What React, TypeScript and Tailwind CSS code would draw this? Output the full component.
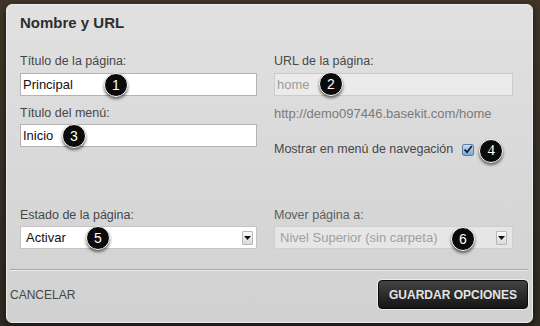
import React from "react";

function Badge({ n, className }: { n: string; className: string }) {
  return (
    <span
      className={`absolute z-10 flex h-[24px] w-[24px] items-center justify-center rounded-full border-[1.5px] border-white bg-[#0a0a0a] text-[14px] leading-none text-white shadow-[0_2px_3px_rgba(0,0,0,0.55)] ${className}`}
    >
      {n}
    </span>
  );
}

function SelectArrow() {
  return (
    <span className="flex h-[14px] w-[11px] items-center justify-center rounded-[1px] border border-[#b8b8b8] bg-gradient-to-b from-[#fbfbfb] to-[#d9d9d9]">
      <svg width="7" height="4" viewBox="0 0 7 4">
        <path d="M0 0h7L3.5 4z" fill="#111" />
      </svg>
    </span>
  );
}

export default function App() {
  return (
    <div className="h-[326px] w-[540px] overflow-hidden bg-gradient-to-b from-[#403627] to-[#2e2a22] pl-[6px] pt-[4px] font-['Liberation_Sans',Arial,sans-serif]">
      <div className="flex h-[319px] w-[527px] flex-col rounded-[6px] border border-[#ececec] bg-gradient-to-b from-[#e1e1e1] to-[#d1d1d1] shadow-[0_2px_6px_rgba(0,0,0,0.6)]">
        <div className="pl-[13px] pr-[19px] pt-[9px]">
          <h1 className="text-[15px] font-bold leading-[18px] text-[#2e2e2e]">
            Nombre y URL
          </h1>

          <div className="mt-[22px] grid grid-cols-[237px_239px] gap-x-[17px]">
            {/* left column */}
            <div>
              <p className="text-[12.5px] leading-[15px] text-[#474747]">
                Título de la página:
              </p>
              <div className="relative mt-[4px]">
                <div className="flex h-[23px] items-center border border-[#b3b3b3] bg-white pl-[2px] text-[13px] text-[#111]">
                  Principal
                </div>
                <Badge n="1" className="left-[84px] top-[0px]" />
              </div>

              <p className="mt-[10px] text-[12.5px] leading-[15px] text-[#474747]">
                Título del menú:
              </p>
              <div className="relative mt-[3px]">
                <div className="flex h-[23px] items-center border border-[#b3b3b3] bg-white pl-[2px] text-[13px] text-[#111]">
                  Inicio
                </div>
                <Badge n="3" className="left-[42px] top-[-0.5px]" />
              </div>
            </div>

            {/* right column */}
            <div>
              <p className="text-[12.5px] leading-[15px] text-[#474747]">
                URL de la página:
              </p>
              <div className="relative mt-[4px]">
                <div className="flex h-[23px] items-center border border-[#cbcbcb] bg-[#ebebeb] pl-[2px] text-[13px] text-[#9b9b9b]">
                  home
                </div>
                <Badge n="2" className="left-[45px] top-[-1px]" />
              </div>

              <p className="mt-[10px] text-[13px] leading-[15px] text-[#7a7a7a]">
                http://demo097446.basekit.com/home
              </p>

              <div className="mt-[21px] flex h-[15px] items-center gap-[9px]">
                <span className="text-[12.5px] leading-[15px] text-[#474747]">
                  Mostrar en menú de navegación
                </span>
                <span className="relative">
                  <span className="flex h-[12px] w-[12px] items-center justify-center rounded-[2px] border border-[#5d7ea6] bg-gradient-to-b from-[#c9dcf0] to-[#7fa6d2]">
                    <svg width="10" height="9" viewBox="0 0 10 9">
                      <path
                        d="M1.5 4.5 L4 7.2 L8.8 1"
                        fill="none"
                        stroke="#0d1f3a"
                        strokeWidth="1.8"
                      />
                    </svg>
                  </span>
                  <Badge
                    n="4"
                    className="left-[17px] top-[-5px] font-['Liberation_Serif',serif] text-[15px]"
                  />
                </span>
              </div>
            </div>
          </div>

          <div className="mt-[51px] grid grid-cols-[237px_239px] gap-x-[17px]">
            <div>
              <p className="text-[12.5px] leading-[15px] text-[#474747]">
                Estado de la página:
              </p>
              <div className="relative mt-[3px]">
                <div className="flex h-[23px] items-center justify-between border border-[#c4c4c4] bg-white pl-[5px] pr-[3px] text-[13px] text-[#111]">
                  <span>Activar</span>
                  <SelectArrow />
                </div>
                <Badge n="5" className="left-[66px] top-[-0.5px]" />
              </div>
            </div>
            <div>
              <p className="text-[12.5px] leading-[15px] text-[#5e5e5e]">
                Mover página a:
              </p>
              <div className="relative mt-[3px]">
                <div className="flex h-[23px] items-center justify-between border border-[#cfcfcf] bg-[#e6e6e6] pl-[5px] pr-[5px] text-[13px] text-[#a0a0a0]">
                  <span>Nivel Superior (sin carpeta)</span>
                  <SelectArrow />
                </div>
                <Badge n="6" className="left-[177px] top-[0.5px]" />
              </div>
            </div>
          </div>
        </div>

        <div className="ml-[3px] mr-[4px] mt-[20px] h-[2px] border-t border-b border-t-[#a8a8a8] border-b-[#ececec]" />

        <div className="mt-[9px] flex items-center justify-between pl-[3px] pr-[4px]">
          <button className="text-[12px] text-[#464646]">CANCELAR</button>
          <button className="flex h-[29px] w-[150px] items-center justify-center rounded-[4px] border border-[#0b0b0b] bg-gradient-to-b from-[#444] to-[#161616] text-[12px] font-bold text-[#e4e4e4] shadow-[0_0_0_1px_rgba(255,255,255,0.55)]">
            GUARDAR OPCIONES
          </button>
        </div>
      </div>
    </div>
  );
}
